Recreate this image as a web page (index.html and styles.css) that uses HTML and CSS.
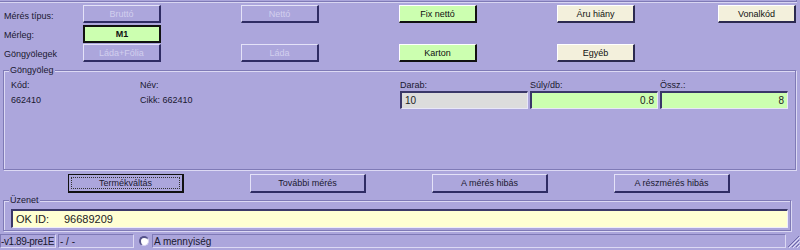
FILE: index.html
```html
<!DOCTYPE html>
<html lang="hu">
<head>
<meta charset="utf-8">
<link rel="stylesheet" href="styles.css">
</head>
<body>
<div class="window">
  <div class="frame-top"></div>
  <div class="top">
    <div class="lbl">Mérés típus:</div>
    <div class="cell"><span class="btn dis">Bruttó</span></div>
    <div class="cell"><span class="btn dis">Nettó</span></div>
    <div class="cell"><span class="btn green">Fix nettó</span></div>
    <div class="cell"><span class="btn beige">Áru hiány</span></div>
    <div class="cell"><span class="btn beige">Vonalkód</span></div>

    <div class="lbl">Mérleg:</div>
    <div class="cell"><span class="btn green sel">M1</span></div>
    <div class="cell"></div>
    <div class="cell"></div>
    <div class="cell"></div>
    <div class="cell"></div>

    <div class="lbl">Göngyölegek</div>
    <div class="cell"><span class="btn dis">Láda+Fólia</span></div>
    <div class="cell"><span class="btn dis">Láda</span></div>
    <div class="cell"><span class="btn green">Karton</span></div>
    <div class="cell"><span class="btn beige">Egyéb</span></div>
    <div class="cell"></div>
  </div>

  <fieldset class="group g1">
    <legend>Göngyöleg</legend>
    <div class="fields">
      <div class="fcol c1"><span class="flbl">Kód:</span><span class="fval">662410</span></div>
      <div class="fcol c2"><span class="flbl">Név:</span><span class="fval">Cikk: 662410</span></div>
      <div class="fcol c3"><span class="flbl">Darab:</span><span class="edit gray">10</span></div>
      <div class="fcol c3"><span class="flbl">Súly/db:</span><span class="edit lgreen right">0.8</span></div>
      <div class="fcol c3"><span class="flbl">Össz.:</span><span class="edit lgreen right">8</span></div>
    </div>
  </fieldset>

  <div class="actions">
    <span class="abtn focus"><span class="inner">Termékváltás</span></span>
    <span class="abtn">További mérés</span>
    <span class="abtn">A mérés hibás</span>
    <span class="abtn">A részmérés hibás</span>
  </div>

  <fieldset class="group g2">
    <legend>Üzenet</legend>
    <div class="msg"><span class="ok">OK ID:</span><span class="okid">96689209</span></div>
  </fieldset>

  <div class="status">
    <span class="pnl p1">-v1.89-pre1E</span>
    <span class="pnl p2">- / -</span>
    <span class="radio"></span>
    <span class="pnl p3">A mennyiség</span>
    <span class="grip"><svg width="14" height="14" viewBox="0 0 14 14"><path d="M13 2L2 13M13 6L6 13M13 10L10 13" stroke="#6e69a8" stroke-width="1"/><path d="M14 3L3 14M14 7L7 14M14 11L11 14" stroke="#e2e0f6" stroke-width="1"/></svg></span>
  </div>
</div>
</body>
</html>
```

FILE: styles.css
```css
html, body {
  margin: 0;
  padding: 0;
}
body {
  width: 800px;
  height: 250px;
  overflow: hidden;
  background: #aca6dc;
  font-family: "Liberation Sans", Arial, sans-serif;
  font-size: 9px;
  color: #1a1830;
}
.window {
  width: 800px;
  height: 250px;
  display: flex;
  flex-direction: column;
}
.frame-top {
  height: 1px;
  margin-right: 3px;
  border-bottom: 1px solid #7f7ab6;
  border-right: 1px solid #7f7ab6;
  box-shadow: 0 1px 0 #d8d5f2;
}
.top {
  display: grid;
  grid-template-columns: 79px 158px 158px 158px 161px 78px;
  grid-template-rows: 20px 19px 19px;
  padding: 3px 0 0 4px;
}
.lbl {
  display: flex;
  align-items: center;
  padding-top: 1px;
}
.cell {
  display: flex;
  align-items: flex-start;
}
.btn {
  box-sizing: border-box;
  width: 78px;
  height: 18px;
  display: flex;
  align-items: center;
  justify-content: center;
  border-top: 1px solid #e4e2f8;
  border-left: 1px solid #e4e2f8;
  border-right: 2px solid #2f2c64;
  border-bottom: 2px solid #2f2c64;
}
.btn.dis {
  color: #d2cfee;
  background: #aca6dc;
}
.btn.green {
  background: #ccffb0;
  color: #101010;
  border-top-color: #ffffff;
  border-left-color: #ffffff;
  border-right-color: #111111;
  border-bottom-color: #111111;
}
.btn.sel {
  border: 2px solid #111111;
  font-size: 9px;
  font-weight: bold;
}
.btn.beige {
  background: #f3f0dc;
  color: #101010;
  border-top-color: #ffffff;
  border-left-color: #ffffff;
  border-right-color: #2c2a50;
  border-bottom-color: #2c2a50;
}

.group {
  margin: 0;
  padding: 0;
  border: 1px solid #7f7ab6;
  box-shadow: inset 1px 1px 0 #dcd9f4, 1px 1px 0 #dcd9f4;
  min-width: 0;
}
.group legend {
  margin-left: 5px;
  padding: 0 1px;
  background: #aca6dc;
  font-size: 9px;
  line-height: 9px;
}
.g1 {
  margin: 3px 4px 0 3px;
  height: 104px;
  box-sizing: border-box;
}
.fields {
  display: flex;
  padding: 5px 0 0 7px;
}
.fcol {
  display: flex;
  flex-direction: column;
}
.c1 { width: 129px; }
.c2 { width: 260px; }
.c3 { width: 130px; }
.flbl {
  height: 10px;
  line-height: 10px;
}
.fval {
  margin-top: 5px;
  line-height: 10px;
}
.edit {
  box-sizing: border-box;
  width: 128px;
  height: 18px;
  margin-top: 1px;
  display: flex;
  align-items: center;
  padding: 0 3px;
  font-size: 10px;
  color: #222;
  border-top: 2px solid #3a3768;
  border-left: 2px solid #3a3768;
  border-right: 1px solid #e8e6f8;
  border-bottom: 1px solid #e8e6f8;
}
.edit.gray { background: #dcdcdc; }
.edit.lgreen { background: #ccffb0; }
.edit.right { justify-content: flex-end; }

.actions {
  display: flex;
  gap: 66px;
  padding: 4px 0 0 68px;
  height: 19px;
}
.abtn {
  box-sizing: border-box;
  width: 116px;
  height: 19px;
  display: flex;
  align-items: center;
  justify-content: center;
  background: #aca6dc;
  border-top: 1px solid #e4e2f8;
  border-left: 1px solid #e4e2f8;
  border-right: 2px solid #2f2c64;
  border-bottom: 2px solid #2f2c64;
}
.abtn.focus {
  border: 1px solid #111;
  border-right-width: 2px;
  border-bottom-width: 2px;
  padding: 2px;
}
.abtn .inner {
  flex: 1;
  align-self: stretch;
  display: flex;
  align-items: center;
  justify-content: center;
  border: 1px dotted #333;
}

.g2 {
  margin: 3px 9px 0 3px;
  height: 35px;
  box-sizing: border-box;
}
.msg {
  box-sizing: border-box;
  margin: 4px 0 0 7px;
  width: 777px;
  height: 19px;
  display: flex;
  align-items: center;
  background: #ffffd2;
  font-size: 11px;
  color: #222;
  padding-left: 3px;
  border-top: 2px solid #3a3768;
  border-left: 2px solid #3a3768;
  border-right: 1px solid #f0eefc;
  border-bottom: 1px solid #f0eefc;
}
.ok { width: 48px; }

.status {
  margin-top: 3px;
  height: 14px;
  display: flex;
  align-items: stretch;
  font-size: 10px;
}
.pnl {
  box-sizing: border-box;
  display: flex;
  align-items: center;
  padding-left: 1px;
  border-top: 1px solid #7f7ab6;
  border-left: 1px solid #7f7ab6;
  border-right: 1px solid #dcd9f4;
  border-bottom: 1px solid #dcd9f4;
  white-space: nowrap;
  overflow: hidden;
}
.p1 { width: 56px; padding-left: 0; letter-spacing: -0.4px; }
.p2 { width: 76px; margin-left: 2px; }
.p3 { width: 634px; margin-left: 3px; }
.radio {
  box-sizing: border-box;
  width: 10px;
  height: 10px;
  margin: 2px 0 0 5px;
  border-radius: 50%;
  background: #fff;
  border-top: 2px solid #55528a;
  border-left: 2px solid #55528a;
  border-right: 1px solid #d8d5f0;
  border-bottom: 1px solid #d8d5f0;
}
.grip {
  display: flex;
  align-items: flex-end;
  margin-left: auto;
}
```
